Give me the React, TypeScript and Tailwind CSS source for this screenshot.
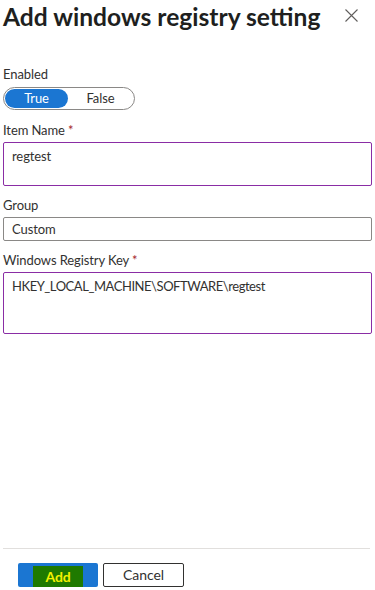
import React, { useState } from "react";

const Label = ({ text, required }: { text: string; required?: boolean }) => (
  <div className="text-[13px] leading-[18px] text-[#323130]">
    {text}
    {required && <span className="text-[#a4262c]"> *</span>}
  </div>
);

const App = () => {
  const [enabled, setEnabled] = useState(true);

  return (
    <div className="h-[590px] w-[375px] flex flex-col bg-white px-[3px] font-['Lato',sans-serif] text-[#323130] tracking-[-0.1px]">
      {/* Header */}
      <div className="flex items-start justify-between h-[65px]">
        <h1 className="text-[24.6px] leading-[34px] font-bold text-[#201f1e] whitespace-nowrap tracking-normal">
          Add windows registry setting
        </h1>
        <button className="mt-[9px] mr-[14px] text-[#605e5c]" title="Close">
          <svg width="13" height="13" viewBox="0 0 13 13" stroke="currentColor" strokeWidth="1.1">
            <path d="M0.5 0.5 L12.5 12.5 M12.5 0.5 L0.5 12.5" />
          </svg>
        </button>
      </div>

      {/* Form */}
      <div className="flex-1">
        <Label text="Enabled" />
        <div className="mt-[4px] flex items-center w-[132px] h-[23px] rounded-full border border-[#8a8886] p-[1px] text-[13px]">
          <button
            onClick={() => setEnabled(true)}
            className={`w-[63px] h-[19px] rounded-full leading-[19px] ${enabled ? "bg-[#1b76d2] text-white" : "text-[#323130]"}`}
          >
            True
          </button>
          <button
            onClick={() => setEnabled(false)}
            className={`flex-1 h-[19px] rounded-full leading-[19px] ${!enabled ? "bg-[#1b76d2] text-white" : "text-[#323130]"}`}
          >
            False
          </button>
        </div>

        <div className="mt-[11px]">
          <Label text="Item Name" required />
          <div className="mt-[3px] h-[44px] border border-[#8a2da5] rounded-[2px] px-[8px] pt-[4px] text-[13px] leading-[18px]">
            regtest
          </div>
        </div>

        <div className="mt-[10px]">
          <Label text="Group" />
          <div className="mt-[3px] h-[24px] border border-[#8a8886] rounded-[2px] px-[8px] text-[13px] leading-[22px]">
            Custom
          </div>
        </div>

        <div className="mt-[10px]">
          <Label text="Windows Registry Key" required />
          <div className="mt-[3px] h-[62px] border border-[#8a2da5] rounded-[2px] px-[8px] pt-[4px] text-[13px] leading-[18px] tracking-[-0.45px]">
            HKEY_LOCAL_MACHINE\SOFTWARE\regtest
          </div>
        </div>
      </div>

      {/* Footer */}
      <div className="h-[42px] border-t border-[#e1dfdd] mr-[2px] flex items-start gap-[5px] pt-[14px] pl-[15px]">
        <button className="w-[80px] h-[24px] bg-[#1b76d2] rounded-[2px] flex justify-center items-end">
          <span className="w-[50px] h-[21px] bg-[#1f7a00] text-[#f2f200] text-[14px] font-bold leading-[21px]">
            Add
          </span>
        </button>
        <button className="w-[81px] h-[24px] border border-[#323130] rounded-[2px] text-[14px] text-[#323130] leading-[22px]">
          Cancel
        </button>
      </div>
    </div>
  );
};

export default App;
